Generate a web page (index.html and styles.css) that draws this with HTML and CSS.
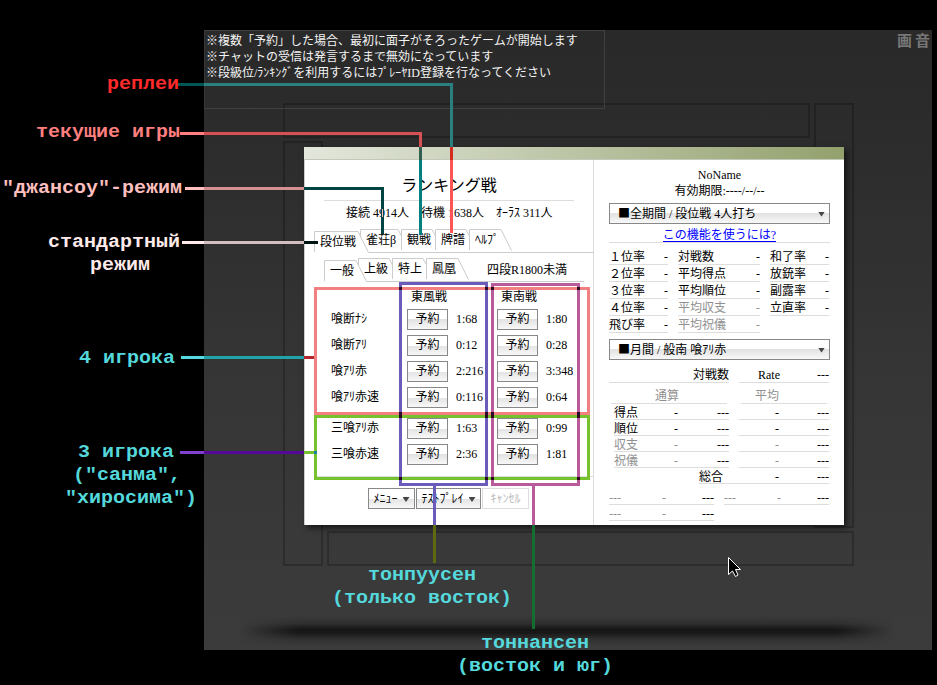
FILE: index.html
```html
<!DOCTYPE html>
<html lang="ja">
<head>
<meta charset="utf-8">
<title>ランキング戦</title>
<link rel="stylesheet" href="styles.css">
</head>
<body>
<main class="stage">
  <svg class="table-lines" width="728" height="620">
    <g class="outline">
      <rect x="80" y="74" width="525" height="33"/>
      <rect x="80" y="112" width="38" height="423"/>
      <rect x="611" y="74" width="38" height="423"/>
      <rect x="124" y="502" width="525" height="33"/>
    </g>
  </svg>
  <div class="ground-shadow"></div>
  <div class="chat">
    <p>※複数「予約」した場合、最初に面子がそろったゲームが開始します</p>
    <p>※チャットの受信は発言するまで無効になっています</p>
    <p>※段級位/ﾗﾝｷﾝｸﾞを利用するにはﾌﾟﾚｰﾔID登録を行なってください</p>
  </div>
  <div class="toggles"><span>画</span><span>音</span></div>

  <section class="dialog">
    <div class="titlebar"></div>
    <div class="panes">
      <div class="lobby">
        <h1>ランキング戦</h1>
        <div class="stats"><span>接続 4914人</span><span>待機 1638人</span><span>ｵｰﾗｽ 311人</span></div>
        <nav class="tabs main-tabs">
          <svg width="280" height="25"><path d="M.5 23V2.5H44L54.500 23.500H280M46.500 7V.5H84L87.500 7M87.500 21V.5H118L121.500 7M121.500 21V.5H152L155.500 7M155.500 21V.5H187L197.500 21.500"/></svg>
          <span class="active">段位戦</span><span>雀荘β</span><span>観戦</span><span>牌譜</span><span>ﾍﾙﾌﾟ</span>
        </nav>
        <nav class="tabs sub-tabs">
          <svg width="262" height="25"><path d="M.5 23V2.500H32L42.500 23.500H260M34.500 7V.5H65L68.500 7M68.500 21V.5H99L102.500 7M102.500 21V.5H134L144.500 21.500"/></svg>
          <span class="active">一般</span><span>上級</span><span>特上</span><span>鳳凰</span><span class="rank">四段R1800未満</span>
        </nav>
        <div class="grid head"><span></span><span>東風戦</span><span></span><span>東南戦</span></div>
        <div class="grid"><span>喰断ﾅｼ</span><button>予約</button><span>1:68</span><button>予約</button><span>1:80</span></div>
        <div class="grid"><span>喰断ｱﾘ</span><button>予約</button><span>0:12</span><button>予約</button><span>0:28</span></div>
        <div class="grid"><span>喰ｱﾘ赤</span><button>予約</button><span>2:216</span><button>予約</button><span>3:348</span></div>
        <div class="grid"><span>喰ｱﾘ赤速</span><button>予約</button><span>0:116</span><button>予約</button><span>0:64</span></div>
        <div class="grid sanma"><span>三喰ｱﾘ赤</span><button>予約</button><span>1:63</span><button>予約</button><span>0:99</span></div>
        <div class="grid"><span>三喰赤速</span><button>予約</button><span>2:36</span><button>予約</button><span>1:81</span></div>
        <div class="actions">
          <button class="w47">ﾒﾆｭｰ<i class="caret"></i></button>
          <button class="w65">ﾃｽﾄﾌﾟﾚｲ<i class="caret"></i></button>
          <button class="w47" disabled>ｷｬﾝｾﾙ</button>
        </div>
      </div>

      <div class="profile">
        <p class="name">NoName</p>
        <p class="expiry">有効期限:----/--/--</p>
        <button class="select"><span><b>■</b>全期間 / 段位戦 4人打ち</span><i class="caret"></i></button>
        <p class="link"><a>この機能を使うには?</a></p>
        <div class="rates">
          <div>
            <p><span>１位率</span><span>-</span></p><p><span>２位率</span><span>-</span></p><p><span>３位率</span><span>-</span></p><p><span>４位率</span><span>-</span></p><p><span>飛び率</span><span>-</span></p>
          </div>
          <div>
            <p><span>対戦数</span><span>-</span></p><p><span>平均得点</span><span>-</span></p><p><span>平均順位</span><span>-</span></p><p class="dim"><span>平均収支</span><span>-</span></p><p class="dim"><span>平均祝儀</span><span>-</span></p>
          </div>
          <div>
            <p><span>和了率</span><span>-</span></p><p><span>放銃率</span><span>-</span></p><p><span>副露率</span><span>-</span></p><p><span>立直率</span><span>-</span></p>
          </div>
        </div>
        <button class="select"><span><b>■</b>月間 / 般南 喰ｱﾘ赤</span><i class="caret"></i></button>
        <div class="pair rate-row"><p class="end"><span>対戦数</span></p><p class="rate"><span>Rate</span><span>---</span></p></div>
        <div class="pair heads dim"><p><span>通算</span></p><p><span>平均</span></p></div>
        <div class="pair score"><p><span>得点</span><span>-</span><span>---</span></p><p><span>-</span><span>---</span></p></div>
        <div class="pair score"><p><span>順位</span><span>-</span><span>---</span></p><p><span>-</span><span>---</span></p></div>
        <div class="pair score"><p><span class="dim">収支</span><span class="dim">-</span><span>---</span></p><p><span class="dim">-</span><span>---</span></p></div>
        <div class="pair score"><p><span class="dim">祝儀</span><span class="dim">-</span><span>---</span></p><p><span class="dim">-</span><span>---</span></p></div>
        <p class="total"><span>総合</span><span>-</span><span>---</span></p>
        <div class="extras">
          <p><span class="dim">---</span><span class="dim">-</span><span>---</span></p>
          <p><span class="dim">---</span><span class="dim">-</span><span>---</span></p>
          <p><span class="dim">---</span><span class="dim">-</span><span>---</span></p>
        </div>
      </div>
    </div>
  </section>
</main>

<svg class="notes" width="937" height="685" lang="ru">
  <g shape-rendering="crispEdges">
    <path fill="#005555" d="M178 83h26v3h-26z"/>
    <path fill="#2b7f7f" d="M204 83h249v64h-3v-61h-246z"/>
    <path fill="#d42b1c" d="M450 147h3v13h-3z"/>
    <path fill="#ff5555" d="M450 160h3v73h-3z"/>
    <path fill="#ff7f7f" d="M180 132h24v3h-24z"/>
    <path fill="#d75053" d="M204 132h218v15h-3v-12h-215z"/>
    <path fill="#2f6050" d="M419 147h3v13h-3z"/>
    <path fill="#008080" d="M419 160h3v75h-3z"/>
    <path fill="#ffbfbf" d="M185 187h19v3h-19z"/>
    <path fill="#d69093" d="M204 187h100v3h-100z"/>
    <path fill="#004444" d="M304 187h80v47h-3v-44h-77z"/>
    <path fill="#ffbfbf" d="M382 209h1v8h-1z"/>
    <path fill="#ffeaea" d="M182 241h22v3h-22z"/>
    <path fill="#d3bfbf" d="M204 241h100v3h-100z"/>
    <path fill="#001414" d="M304 241h14v3h-14z"/>
    <path fill="#55dade" d="M181 356h23v3h-23z"/>
    <path fill="#1fa5a8" d="M204 356h100v3h-100z"/>
    <path fill="#b3262b" d="M304 356h10v3h-10z"/>
    <path fill="#8040d0" d="M180 451h24v3h-24z"/>
    <path fill="#540a96" d="M204 451h100v3h-100z"/>
    <path fill="#76c22e" d="M304 451h10v3h-10z"/>
    <g fill="none" stroke-width="3">
      <rect x="315.500" y="288.500" width="273" height="125" stroke="#f28080"/>
      <rect x="315.500" y="416.500" width="273" height="62" stroke="#76c22e"/>
      <rect x="400.500" y="283.500" width="86" height="201" stroke="#6b5bbb"/>
      <rect x="492.500" y="284.500" width="86" height="200" stroke="#b95a9b"/>
    </g>
    <path fill="#1c80aa" d="M314 451h3v3h-3z"/>
    <path fill="#2a0a20" d="M399 287h3v3h-3zM485 287h3v3h-3zM491 287h3v3h-3zM577 287h3v3h-3zM399 412h3v6h-3zM485 412h3v6h-3zM491 412h3v6h-3zM577 412h3v6h-3zM399 477h3v3h-3zM485 477h3v3h-3zM491 477h3v3h-3zM577 477h3v3h-3z"/>
    <path fill="#6b5bbb" d="M433 485h3v40h-3z"/>
    <path fill="#5f6a10" d="M433 525h3v38h-3z"/>
    <path fill="#b95a9b" d="M532 486h3v39h-3z"/>
    <path fill="#126e31" d="M532 525h3v104h-3z"/>
  </g>
  <g class="labels">
    <text x="107" y="89" textLength="72" lengthAdjust="spacingAndGlyphs" fill="#ff2a2a">реплеи</text>
    <text x="36" y="137" textLength="144" lengthAdjust="spacingAndGlyphs" fill="#ff7f7f">текущие игры</text>
    <text x="2" y="193" textLength="180" lengthAdjust="spacingAndGlyphs" fill="#ffbfbf">"джансоу"-режим</text>
    <text x="48" y="247" textLength="132" lengthAdjust="spacingAndGlyphs" fill="#ffeaea">стандартный</text>
    <text x="90" y="270" textLength="60" lengthAdjust="spacingAndGlyphs" fill="#ffeaea">режим</text>
    <text x="79" y="363" textLength="96" lengthAdjust="spacingAndGlyphs">4 игрока</text>
    <text x="78" y="457" textLength="96" lengthAdjust="spacingAndGlyphs">3 игрока</text>
    <text x="73" y="480" textLength="108" lengthAdjust="spacingAndGlyphs">("санма",</text>
    <text x="65" y="503" textLength="132" lengthAdjust="spacingAndGlyphs">"хиросима")</text>
    <text x="368" y="580" textLength="108" lengthAdjust="spacingAndGlyphs">тонпуусен</text>
    <text x="332" y="603" textLength="180" lengthAdjust="spacingAndGlyphs">(только восток)</text>
    <text x="481" y="648" textLength="108" lengthAdjust="spacingAndGlyphs">тоннансен</text>
    <text x="457" y="671" textLength="156" lengthAdjust="spacingAndGlyphs">(восток и юг)</text>
  </g>
  <path d="M728.500 557.500V574.500L732.500 571L735.500 576.500L738 575L735.500 569.500H740.500Z" fill="#000" stroke="#fff"/>
</svg>
</body>
</html>
```

FILE: styles.css
```css
* { box-sizing: border-box; margin: 0; padding: 0; }
body {
  position: relative;
  width: 937px;
  height: 685px;
  padding: 30px 0 0 204px;
  overflow: hidden;
  background: #000;
  color: #000;
  font: 12px/16px "Liberation Serif", "Noto Sans CJK JP", serif;
}
p, span { white-space: pre; }
.stage {
  position: relative;
  width: 728px;
  height: 620px;
  background: linear-gradient(#292929, #2d2d2d 22%, #353535 55%, #393939 80%, #3b3b3b);
}
.table-lines { position: absolute; left: 0; top: 0; }
.outline { fill: none; stroke: #000; stroke-opacity: .22; stroke-width: 2; }
.ground-shadow {
  position: absolute;
  left: 36px;
  top: 586px;
  width: 654px;
  height: 30px;
  background: linear-gradient(transparent, rgba(20, 20, 20, .3) 25%, rgba(20, 20, 20, .95) 45%, rgba(20, 20, 20, .9) 55%, rgba(20, 20, 20, .25) 78%, transparent);
  mask-image: linear-gradient(90deg, transparent, #000 9%, #000 91%, transparent);
}
.chat {
  position: relative;
  width: 401px;
  height: 79px;
  padding: 2px 1px;
  border: 1px solid #404040;
  border-left-color: #383838;
  color: #f4f4f4;
}
.toggles {
  position: absolute;
  right: 2px;
  top: 0;
  display: flex;
  gap: 3px;
  color: #777;
  font: bold 15px/19px "Noto Sans CJK JP", sans-serif;
}
.dialog {
  position: relative;
  width: 540px;
  height: 378px;
  margin: 38px 0 0 100px;
  background: #fff;
  box-shadow: 3px 3px 6px rgba(0, 0, 0, .6);
}
.titlebar { height: 13px; background: linear-gradient(90deg, #e3e7dc, #93a16d); border-bottom: 1px solid #c4c8bb; }
.panes { display: grid; grid-template-columns: 289px 251px; height: 365px; }
.lobby { padding-left: 10px; border-left: 1px solid #ccc; }
h1 { margin-left: 9px; width: 250px; height: 41px; border-bottom: 1px solid #ddd; font: 16px/49px "Noto Sans CJK JP", sans-serif; text-align: center; }
.stats { display: flex; gap: 12px; padding: 4px 0 0 31px; height: 28px; }
.tabs { position: relative; display: flex; height: 29px; }
.tabs svg { position: absolute; left: 0; top: 0; fill: none; stroke: #ccc; }
.tabs span { position: relative; width: 34px; padding-top: 3px; }
.tabs .active { padding-top: 5px; }
.main-tabs { margin-left: -1px; padding-left: 6px; }
.main-tabs .active { width: 46px; }
.main-tabs span:nth-of-type(2) { width: 41px; }
.sub-tabs { margin-left: 9px; padding-left: 6px; }
.tabs .rank { margin-left: 21px; padding-top: 4px; width: 90px; }
.grid { display: grid; grid-template-columns: 76px 49px 41px 49px 50px; align-items: center; height: 26px; padding-left: 16px; }
.grid.head { height: 19px; grid-template-columns: 80px 50px 40px 50px; }
.sanma { margin-top: 5px; }
button {
  height: 21px;
  width: 41px;
  padding-top: 1px;
  border: 1px solid #888;
  background: linear-gradient(#fff 50%, #e2e2e2 50%, #f8f8f8);
  color: #000;
  font: inherit;
  line-height: 17px;
  white-space: nowrap;
}
.actions { display: flex; gap: 1px; height: 33px; margin: 9px 0 0 -1px; padding: 11px 0 0 54px; border-top: 1px solid #ddd; }
.actions button { display: flex; align-items: center; justify-content: center; gap: 5px; }
.actions .w47 { width: 47px; }
.actions .w65 { width: 65px; }
button:disabled { border-color: #ddd; background: #fff; color: #bbb; }
.caret { width: 7px; height: 5px; margin-top: 1px; background: #444; clip-path: polygon(0 0, 100% 0, 50% 100%); }
.profile { padding: 7px 14px 0 15px; border-left: 1px solid #ddd; }
.profile p { line-height: 17px; }
.name, .expiry { height: 16px; text-align: center; }
.select { display: flex; justify-content: space-between; align-items: center; width: 221px; margin-top: 4px; padding: 0 4px 0 8px; }
.select b { font: 12px/16px "Noto Sans CJK JP", sans-serif; }
.link { height: 19px; padding-top: 3px; text-align: center; border-bottom: 1px solid #ddd; }
.link a { display: inline-block; height: 15px; border-bottom: 1px solid #00f; color: #00f; }
.rates { display: grid; grid-template-columns: 59px 82px 59px; gap: 10px; height: 92px; padding-top: 5px; }
.rates p { display: flex; justify-content: space-between; height: 17px; line-height: 19px; border-bottom: 1px solid #ddd; }
.dim { color: #909090; }
.pair { display: grid; grid-template-columns: 120px 90px; gap: 10px; }
.pair p { display: flex; height: 16px; border-bottom: 1px solid #ddd; }
.rate-row { margin-top: 7px; }
.rate-row .end { justify-content: flex-end; }
.rate-row .rate { justify-content: space-between; padding-left: 19px; }
.heads { grid-template-columns: 116px 86px; gap: 14px; margin: 5px 0 0 2px; }
.heads p { padding-left: 44px; }
.heads p + p { padding-left: 14px; }
.profile .score p, .profile .total, .profile .extras p { line-height: 18px; }
.score p { justify-content: space-between; }
.score p:first-child { margin-left: 5px; }
.score p:first-child span:nth-child(2) { margin-left: -3px; }
.score p + p { padding-left: 36px; }
.total { display: flex; width: 130px; height: 16px; margin-left: 90px; border-bottom: 1px solid #ddd; }
.total span:nth-child(1) { width: 76px; }
.total span:nth-child(2) { width: 42px; }
.extras { display: grid; grid-template-columns: 105px 105px; gap: 0 10px; margin-top: 5px; }
.extras p { display: flex; justify-content: space-between; height: 16px; border-bottom: 1px solid #ddd; }
.extras span:nth-child(2) { margin-left: 5px; }
.notes { position: absolute; left: 0; top: 0; }
.labels { fill: #55d8dc; font: bold 18px "Liberation Mono", monospace; white-space: pre; }
```
